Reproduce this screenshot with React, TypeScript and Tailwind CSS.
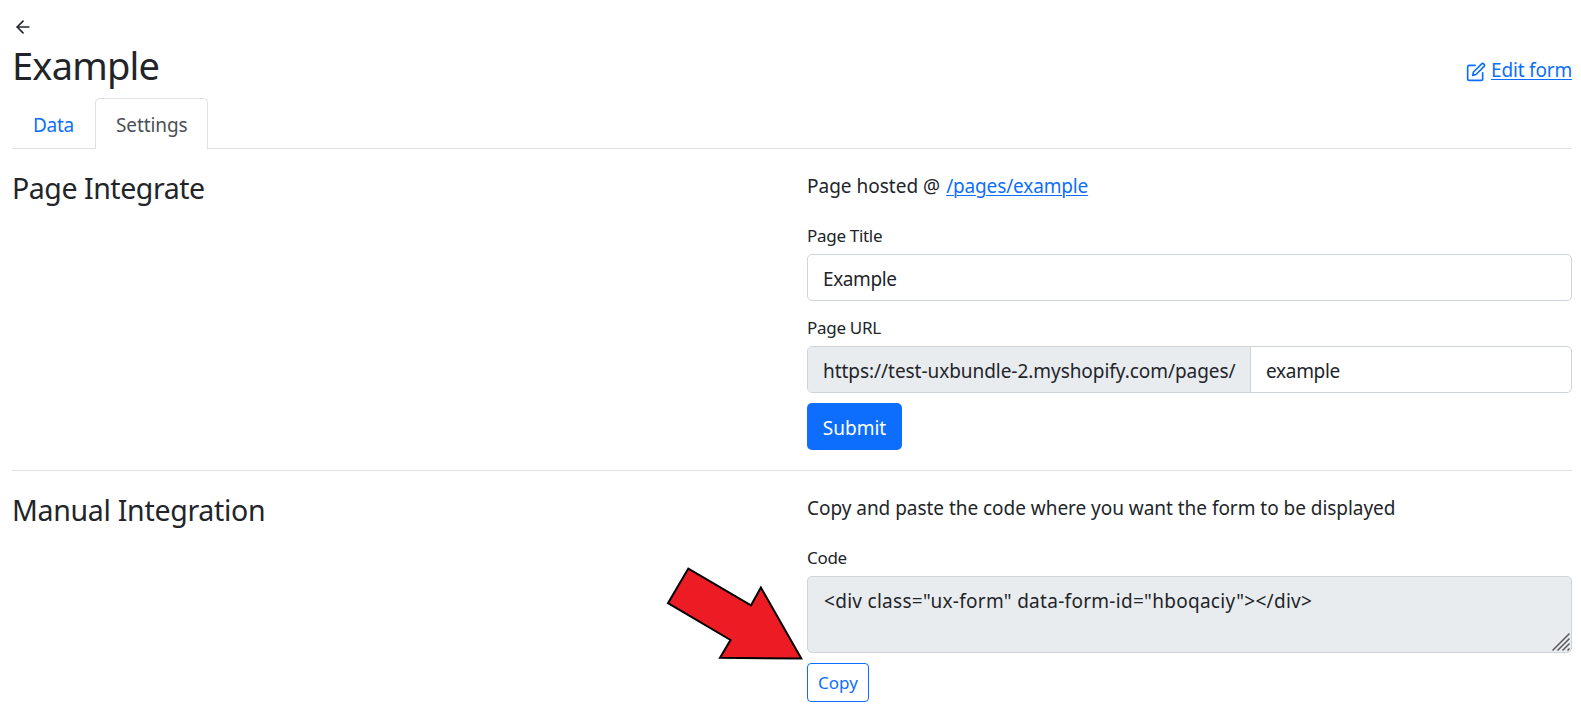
import type { ReactNode } from 'react';
import { FiArrowLeft, FiEdit } from 'react-icons/fi';

function Section({ title, titleClass, children }: { title: string; titleClass: string; children: ReactNode }) {
  return (
    <section className="flex">
      <h2 className={`w-[795px] shrink-0 pt-[21px] text-[28.5px] leading-9 ${titleClass}`}>{title}</h2>
      <div className="flex w-[765px] flex-col items-start pt-[22px]">{children}</div>
    </section>
  );
}

function Label({ children }: { children: ReactNode }) {
  return <label className="mb-[7px] h-[22px] text-[17px] leading-[22px] tracking-[-0.3px]">{children}</label>;
}

function ResizeGrip() {
  return (
    <svg className="absolute right-[1px] bottom-[1px]" width="18" height="18" viewBox="0 0 18 18" stroke="#5a5a5a" strokeWidth="1.5">
      <path d="M0.5 17.5L17.5 0.5M5.5 17.5L17.5 5.5M10.5 17.5L17.5 10.5M15.5 17.5L17.5 15.5" />
    </svg>
  );
}

function PointerArrow() {
  return (
    <svg className="pointer-events-none absolute top-[560px] left-[660px]" width="150" height="105" viewBox="660 560 150 105">
      <path
        d="M688.3 568.6L751 605.3L760.9 587.6L801.3 658.6L720 657.7L730.5 640L668 603.2Z"
        fill="#ed1c24"
        stroke="#000"
        strokeWidth="2"
      />
    </svg>
  );
}

export default function App() {
  return (
    <main className="relative h-[713px] w-[1581px] overflow-hidden bg-white pt-[17px] pr-[9px] pl-3 font-['Noto_Sans','Open_Sans',sans-serif] text-[19px] leading-[30px] text-[#212529]">
      <FiArrowLeft className="ml-px block h-5 w-5" />

      <header className="mt-1 flex h-12 items-start justify-between">
        <h1 className="text-[38px] leading-[48px] tracking-[-0.8px]">Example</h1>
        <a className="mt-[14px] flex items-center text-[#0d6efd]">
          <FiEdit className="mt-[3px] mr-[5px] h-5 w-5" />
          <span className="tracking-[-0.18px] underline decoration-1 underline-offset-2">Edit form</span>
        </a>
      </header>

      <nav className="mt-[9px] flex h-[51px] border-b border-[#dee2e6]">
        <a className="w-[83px] pt-3 pl-[21px] tracking-[-0.3px] text-[#0d6efd]">Data</a>
        <a className="h-[51px] w-[113px] rounded-t-[5px] border border-b-0 border-[#dee2e6] bg-white pt-[11px] pl-[20px] tracking-[-0.1px] text-[#495057]">
          Settings
        </a>
      </nav>

      <Section title="Page Integrate" titleClass="tracking-[-0.45px]">
        <p className="mb-6">
          Page hosted @
          <a className="ml-[6px] tracking-[-0.15px] text-[#0d6efd] underline decoration-1 underline-offset-2">/pages/example</a>
        </p>
        <Label>Page Title</Label>
        <div className="mb-4 flex h-[47px] w-full items-center rounded-[5px] border border-[#ced4da] pt-[3px] pl-[15px] tracking-[-0.4px]">
          Example
        </div>
        <Label>Page URL</Label>
        <div className="mb-[10px] flex h-[47px] w-full overflow-hidden rounded-[5px] border border-[#ced4da]">
          <span className="w-[443px] shrink-0 border-r border-[#ced4da] bg-[#e9ecef] pt-[9px] pl-[15px] tracking-[-0.05px]">
            https://test-uxbundle-2.myshopify.com/pages/
          </span>
          <span className="pt-[9px] pl-[15px] tracking-[-0.3px]">example</span>
        </div>
        <button className="h-[47px] w-[95px] rounded-[5px] bg-[#0d6efd] pt-[3px] text-white">Submit</button>
      </Section>

      <hr className="mt-5 border-[#dee2e6]" />

      <Section title="Manual Integration" titleClass="tracking-[-0.3px]">
        <p className="mb-6 tracking-[-0.035px]">Copy and paste the code where you want the form to be displayed</p>
        <Label>Code</Label>
        <div className="relative mb-[10px] h-[77px] w-full rounded-[5px] border border-[#ced4da] bg-[#e9ecef] pt-[9px] pl-[16px] tracking-[0.29px]">
          {'<div class="ux-form" data-form-id="hboqaciy"></div>'}
          <ResizeGrip />
        </div>
        <button className="h-[39px] w-[62px] rounded-[4px] border border-[#0d6efd] pt-px text-[17px] leading-[26px] text-[#0d6efd]">
          Copy
        </button>
      </Section>

      <PointerArrow />
    </main>
  );
}
